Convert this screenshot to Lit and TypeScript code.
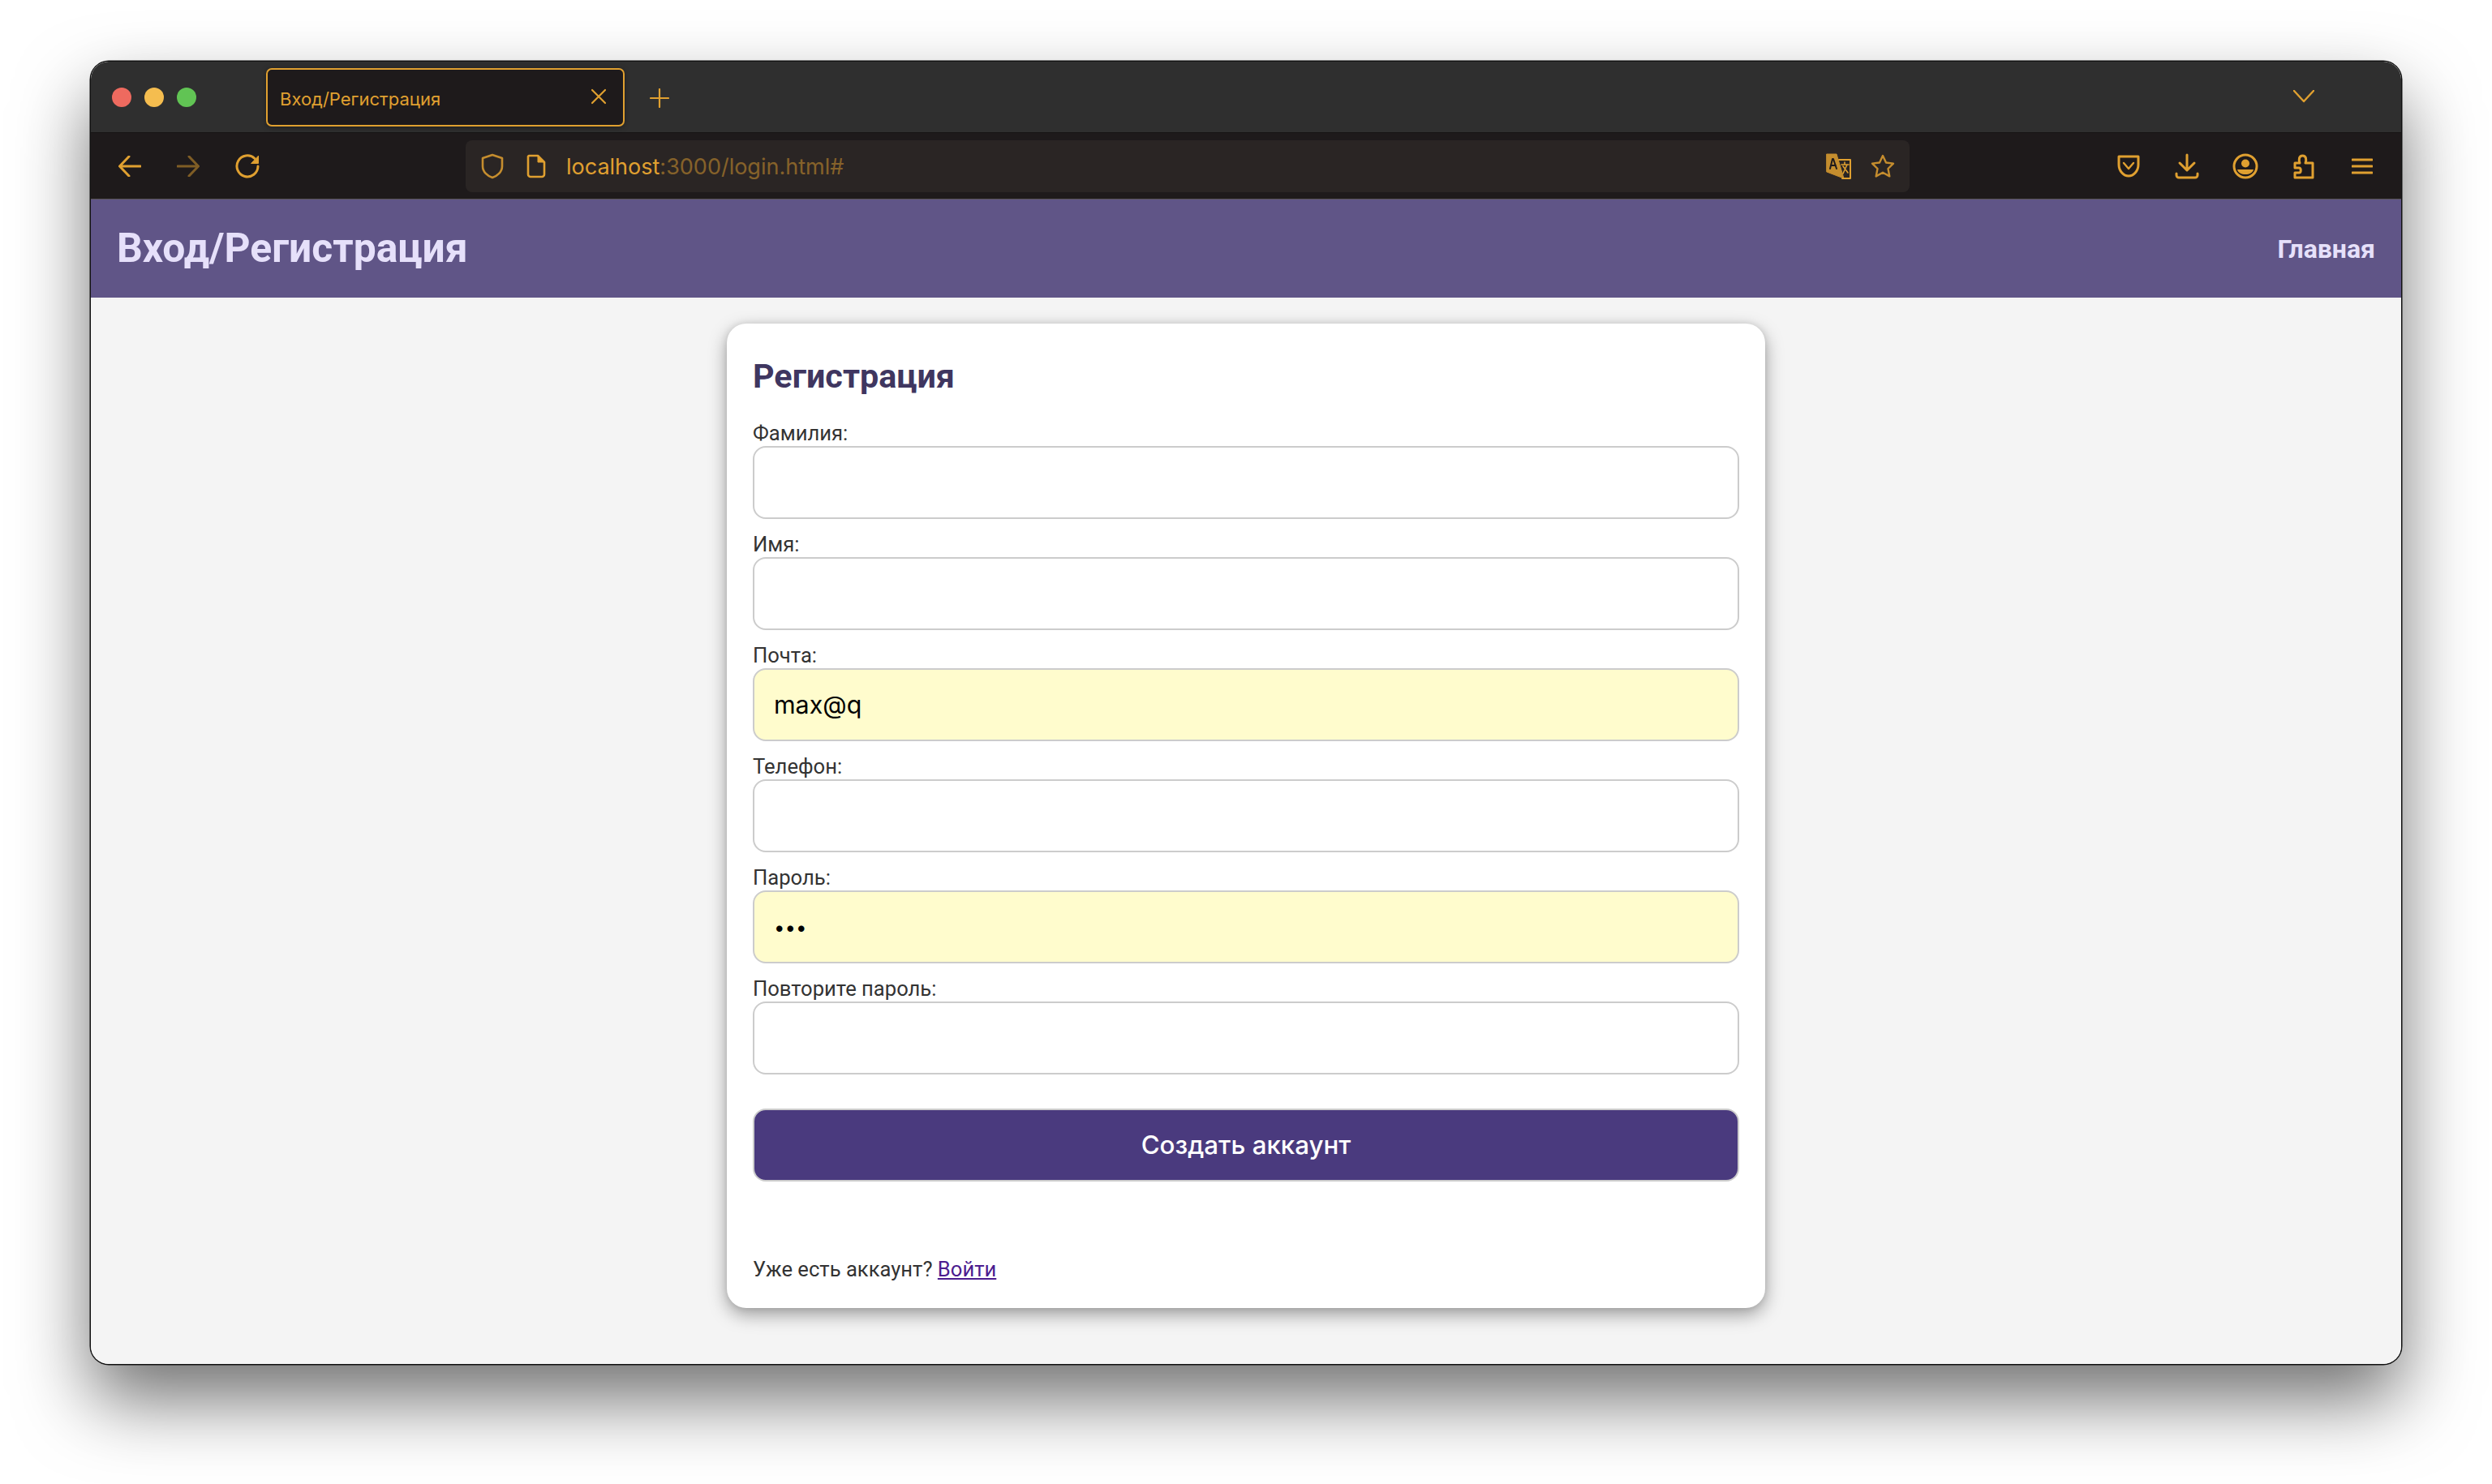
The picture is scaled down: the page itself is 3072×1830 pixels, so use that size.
import { LitElement, html, css, svg } from "lit";
import { customElement } from "lit/decorators.js";

const ic = (w: number, h: number, body: unknown, cls = "") =>
  html`<svg class="ic ${cls}" width=${w} height=${h} viewBox="0 0 ${w} ${h}" fill="none" stroke="currentColor" stroke-width="3" stroke-linecap="round" stroke-linejoin="round">${body}</svg>`;

const fields: { label: string; type: string; value?: string }[] = [
  { label: "Фамилия:", type: "text" },
  { label: "Имя:", type: "text" },
  { label: "Почта:", type: "text", value: "max@q" },
  { label: "Телефон:", type: "text" },
  { label: "Пароль:", type: "password", value: "abc" },
  { label: "Повторите пароль:", type: "password" },
];

@customElement("app-root")
export class AppRoot extends LitElement {
  static styles = css`
    :host {
      display: block;
      width: 3072px;
      height: 1830px;
      box-sizing: border-box;
      padding: 76px 0 0 112px;
      background: #fff;
      overflow: hidden;
      font-family: Roboto, "Liberation Sans", sans-serif;
    }
    .ic { display: block; flex: none; }
    .frame {
      width: 2848px;
      height: 1606px;
      border-radius: 22px;
      box-shadow: 0 0 0 1.5px #111, 0 44px 90px rgba(0, 0, 0, 0.56);
    }
    .window {
      width: 2848px;
      height: 1606px;
      display: flex;
      flex-direction: column;
      border-radius: 22px;
      overflow: hidden;
      background: #f4f4f4;
    }
    .tabstrip {
      height: 88px;
      flex: none;
      background: #2f2f2f;
      border-bottom: 1px solid #171515;
      box-sizing: border-box;
      display: flex;
      align-items: center;
      color: #e0a030;
      padding-left: 26px;
    }
    .lights { display: flex; gap: 16px; width: 190px; flex: none; }
    .light { width: 24px; height: 24px; border-radius: 50%; }
    .red { background: #ee6a5f; }
    .yellow { background: #f5bd4f; }
    .green { background: #61c454; }
    .tab {
      width: 442px;
      height: 72px;
      box-sizing: border-box;
      border: 2px solid #e0a030;
      border-radius: 7px;
      background: #1e1a1b;
      display: flex;
      align-items: center;
      justify-content: space-between;
      padding: 0 20px 0 15px;
      font: 22px Inter, "Noto Sans", sans-serif;
      box-shadow: 0 1px 6px rgba(0, 0, 0, 0.35);
    }
    .tab span { position: relative; top: 2px; }
    .tab .ic { margin-top: -2px; }
    .plus { margin-left: 31px; margin-top: 2px; }
    .spacer { flex: 1; }
    .chev { margin-right: 107px; margin-top: -2px; }
    .toolbar {
      height: 81px;
      flex: none;
      background: #1e1a1b;
      display: flex;
      align-items: center;
      color: #e0a030;
      box-sizing: border-box;
      padding-left: 34px;
    }
    .nav { display: flex; align-items: center; gap: 44px; width: 428px; flex: none; }
    .dim { opacity: 0.5; }
    .url {
      width: 1780px;
      height: 64px;
      flex: none;
      box-sizing: border-box;
      background: #2a2524;
      border-radius: 8px;
      display: flex;
      align-items: center;
      padding: 0 17px 0 18px;
      font: 27px Inter, "Noto Sans", sans-serif;
    }
    .addr { margin-left: 24px; margin-top: 1px; }
    .addr em { font-style: normal; opacity: 0.5; }
    .url .ic + .ic { margin-left: 26px; }
    .url .spacer + .ic { margin-left: 0; }
    .url .ic.star { margin-left: 22px; }
    .tools {
      flex: 1;
      display: flex;
      align-items: center;
      justify-content: flex-end;
      padding-right: 12px;
    }
    .slot { width: 72px; display: flex; justify-content: center; }
    header {
      height: 122px;
      flex: none;
      background: #605587;
      border-top: 1px solid #5a5458;
      box-sizing: border-box;
      display: flex;
      align-items: center;
      justify-content: space-between;
      padding: 0 32px;
      color: #e6e0fa;
      font-weight: 700;
    }
    header h1 { margin: 0; font-size: 49.8px; line-height: 1; }
    header a { font-size: 32px; }
    main {
      flex: 1;
      display: flex;
      justify-content: center;
      align-items: flex-start;
      padding-top: 32px;
    }
    .card {
      width: 1280px;
      height: 1214px;
      box-sizing: border-box;
      background: #fff;
      border-radius: 24px;
      padding: 40px 32px 0;
      box-shadow: 0 8px 22px rgba(0, 0, 0, 0.36), 0 0 8px rgba(0, 0, 0, 0.1);
      display: flex;
      flex-direction: column;
    }
    h2 {
      margin: 0;
      font-size: 41.3px;
      line-height: 50px;
      font-weight: 700;
      color: #3f3660;
      height: 71px;
    }
    label {
      display: block;
      font-size: 25.6px;
      line-height: 32px;
      color: #333;
      padding-top: 8px;
      height: 25px;
      margin-bottom: 7px;
    }
    input {
      display: block;
      width: 100%;
      height: 90px;
      box-sizing: border-box;
      border: 2px solid #ccc;
      border-radius: 16px;
      background: #fff;
      padding: 0 24px;
      margin-bottom: 7px;
      font: 30.4px Inter, "Noto Sans", sans-serif;
      color: #000;
      outline: none;
    }
    input.filled { background: #fffccd; }
    input[type="password"] { font-size: 24px; }
    button {
      margin-top: 35px;
      height: 90px;
      width: 100%;
      flex: none;
      background: #4a3a7e;
      color: #fff;
      border: 2px solid #ccc;
      border-radius: 16px;
      font: 500 31.3px Inter, "Noto Sans", sans-serif;
    }
    .foot {
      margin: 92px 0 0;
      font-size: 25.6px;
      line-height: 32px;
      color: #333;
    }
    .foot a { color: #4c1d8f; text-decoration: underline; }
  `;

  render() {
    return html`
      <div class="frame">
        <div class="window">
          <div class="tabstrip">
            <div class="lights">
              <div class="light red"></div>
              <div class="light yellow"></div>
              <div class="light green"></div>
            </div>
            <div class="tab">
              <span>Вход/Регистрация</span>
              ${ic(20, 20, svg`<path d="M2 2 18 18M18 2 2 18" stroke-width="2.2"/>`)}
            </div>
            ${ic(24, 24, svg`<path d="M12 1V23M1 12H23" stroke-width="2.2"/>`, "plus")}
            <div class="spacer"></div>
            ${ic(26, 16, svg`<path d="M1 1 13 14 25 1" stroke-width="2.4"/>`, "chev")}
          </div>
          <div class="toolbar">
            <div class="nav">
              ${ic(28, 26, svg`<path d="M27 13H3M13 1 1.500 13 13 25"/>`)}
              ${ic(28, 26, svg`<path d="M1 13H25M15 1 26.500 13 15 25"/>`, "dim")}
              ${ic(30, 30, svg`<path d="M24 5.500A13 13 0 1 0 28 15"/><path d="M28.500 2.500V11.500H20Z" fill="currentColor" stroke-width="1"/>`)}
            </div>
            <div class="url">
              ${ic(30, 32, svg`<path d="M15 2 27 6V16C27 23 21 28 15 30 9 28 3 23 3 16V6Z" stroke-width="2.6" opacity=".85"/>`)}
              ${ic(26, 30, svg`<path d="M4 2H15L23 10V25A3 3 0 0 1 20 28H6A3 3 0 0 1 3 25V3Z" stroke-width="2.6"/><path d="M15 2V10H23Z" fill="currentColor" stroke-width="1"/>`)}
              <span class="addr">localhost<em>:3000/login.html#</em></span>
              <div class="spacer"></div>
              ${ic(34, 34, svg`<path d="M3 2H15L24 32 3 24Z" fill="currentColor" stroke-width="1" opacity=".85"/><path d="M18 9H32V32H22" stroke-width="2"/><path d="M21 15H30M25 12V15M28 15 23 26M23 17 29 25" stroke-width="1.6"/><path d="M7 20 10 8H11L15 20M8 16H14" stroke="#1e1a1b" stroke-width="2"/>`)}
              ${ic(32, 32, svg`<path d="M16 3 20 11.500 29 12.600 22.500 19 24.300 28.400 16 23.800 7.700 28.400 9.500 19 3 12.600 12 11.500Z" stroke-width="2.400" opacity=".85"/>`, "star")}
            </div>
            <div class="tools">
              <div class="slot">${ic(30, 28, svg`<path d="M3 2H27V12C27 20 21 26 15 26 9 26 3 20 3 12Z" stroke-width="3"/><path d="M9 10 15 17 21 10" stroke-width="2.4"/>`)}</div>
              <div class="slot">${ic(30, 32, svg`<path d="M15 2V20M6 12 15 21 24 12M2 25V27A3 3 0 0 0 5 30H25A3 3 0 0 0 28 27V25"/>`)}</div>
              <div class="slot">${ic(32, 32, svg`<circle cx="16" cy="16" r="14"/><circle cx="16" cy="12.500" r="5" fill="currentColor" stroke="none"/><path d="M6 20H26C25 24 21 26 16 26 11 26 7 24 6 20Z" fill="currentColor" stroke="none"/>`)}</div>
              <div class="slot">${ic(28, 32, svg`<path d="M3 12H9C7.500 8 8 3 12.500 3 17 3 17.500 8 16 12H25V30H3V24H8C11 24 11 18 8 18H3Z" stroke-width="3"/>`)}</div>
              <div class="slot">${ic(26, 22, svg`<path d="M1 3H25M1 11H25M1 19H25"/>`)}</div>
            </div>
          </div>
          <header>
            <h1>Вход/Регистрация</h1>
            <a>Главная</a>
          </header>
          <main>
            <div class="card">
              <h2>Регистрация</h2>
              ${fields.map(
                (f) => html`<label>${f.label}</label>
                  <input class=${f.value ? "filled" : ""} type=${f.type} .value=${f.value ?? ""} />`
              )}
              <button>Создать аккаунт</button>
              <p class="foot">Уже есть аккаунт? <a>Войти</a></p>
            </div>
          </main>
        </div>
      </div>
    `;
  }
}
